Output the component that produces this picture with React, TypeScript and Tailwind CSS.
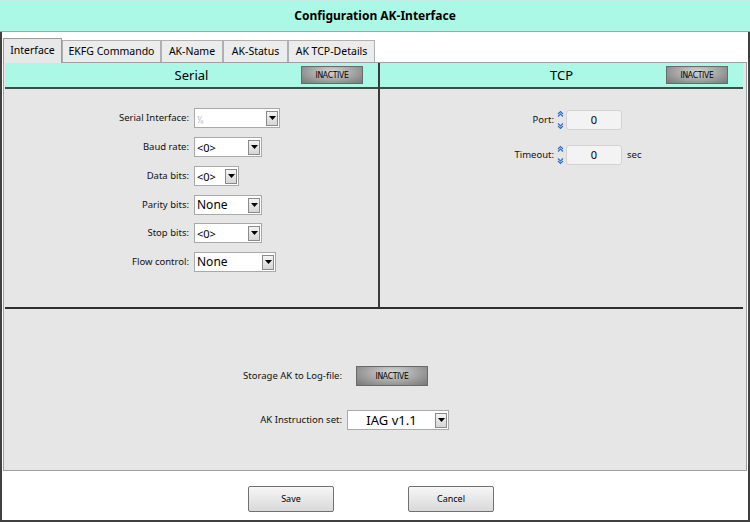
import React from "react";

const font = { fontFamily: '"Noto Sans", "Open Sans", Arial, sans-serif' };

function DropBtn() {
  return (
    <div className="w-[12px] h-[15px] my-auto mr-[1px] border border-[#8a8a8a] bg-gradient-to-b from-[#f4f4f4] to-[#d6d6d6] flex items-center justify-center">
      <svg width="7" height="4" viewBox="0 0 7 4"><path d="M0 0h7L3.5 4z" fill="#000" /></svg>
    </div>
  );
}

function Combo({ w, children, big }: { w: string; children?: React.ReactNode; big?: boolean }) {
  return (
    <div className={`${w} h-[20px] bg-white border border-[#a9a9a9] flex items-center`}>
      <div className={`flex-1 pl-[2px] ${big ? "text-[12px]" : "text-[11px]"} leading-none text-black`}>{children}</div>
      <DropBtn />
    </div>
  );
}

function Inactive({ w = "w-[62px]", h = "h-[18px]" }: { w?: string; h?: string }) {
  return (
    <div
      className={`${w} ${h} border border-[#6a6a6a] flex items-center justify-center text-[8.5px] tracking-[-0.3px] text-black bg-[radial-gradient(ellipse_at_50%_30%,#d6d6d6_0%,#ababab_45%,#787878_100%)]`}
      style={{ fontFamily: '"Liberation Sans Narrow", "DejaVu Sans Condensed", "Noto Sans", sans-serif' }}
    >
      INACTIVE
    </div>
  );
}

function Spin() {
  return (
    <svg width="7" height="20" viewBox="0 0 7 20" className="mr-[2px]">
      <path d="M1 4L3.5 1.5L6 4M1 6.5L3.5 4L6 6.5" stroke="#2f6fc8" strokeWidth="1.2" fill="none" />
      <path d="M1 13.5L3.5 16L6 13.5M1 16L3.5 18.5L6 16" stroke="#2f6fc8" strokeWidth="1.2" fill="none" />
    </svg>
  );
}

function NumBox() {
  return (
    <div className="w-[56px] h-[20px] rounded-[3px] border border-[#d2d2d2] bg-[#f3f3f3] flex items-center justify-center text-[11px] text-black">
      0
    </div>
  );
}

function Row({ label, children, mt }: { label: string; children: React.ReactNode; mt: string }) {
  return (
    <div className={`flex items-center ${mt}`}>
      <div className="w-[189px] text-right pr-[5px] text-[9.5px] text-[#111]">{label}</div>
      {children}
    </div>
  );
}

export default function App() {
  const tabs = ["EKFG Commando", "AK-Name", "AK-Status", "AK TCP-Details"];
  const tabW = ["w-[99px]", "w-[62px]", "w-[65px]", "w-[87px]"];
  return (
    <div className="w-[750px] h-[522px] bg-white flex flex-col" style={font}>
      <div className="h-[32px] shrink-0 bg-[#aaf8e5] border-t border-[#c8ece4] border-b border-b-[#8fb0a8] flex items-center justify-center">
        <span className="text-[12px] font-bold text-black">Configuration AK-Interface</span>
      </div>
      <div className="flex-1 border-l-2 border-r-2 border-b-2 border-[#404040] flex flex-col pl-[1px] pr-[1px]">
        {/* tabs */}
        <div className="flex items-end h-[30px] pt-[5px]">
          <div className="w-[59px] h-[25px] bg-[#e8e8e8] border border-[#9a9a9a] border-b-0 text-[10.5px] flex items-center justify-center text-black -mb-[1px] relative z-10">
            Interface
          </div>
          {tabs.map((t, i) => (
            <div
              key={t}
              className={`${tabW[i]} h-[22px] bg-[#ececec] border border-[#b0b0b0] border-b-0 text-[10.5px] flex items-center justify-center text-black`}
            >
              {t}
            </div>
          ))}
        </div>
        {/* panel */}
        <div className="h-[409px] bg-[#e6e6e6] border border-[#a0a0a0] flex flex-col">
          <div className="h-[244px] flex pl-[1px] pr-[3px]">
            {/* serial */}
            <div className="w-[373px] flex flex-col">
              <div className="h-[24px] bg-[#aaf8e5] flex items-center relative">
                <div className="flex-1 text-center text-[13px] text-black pt-[2px]">Serial</div>
                <div className="absolute left-[296px] top-[3px]"><Inactive /></div>
              </div>
              <div className="h-[2px] bg-[#34524b]" />
              <div className="flex flex-col pt-[19px]">
                <Row label="Serial Interface:" mt="mt-0">
                  <Combo w="w-[86px]">
                    <span className="text-[8px] text-[#9ab0d0] leading-none">⅟₀</span>
                  </Combo>
                </Row>
                <Row label="Baud rate:" mt="mt-[9px]">
                  <Combo w="w-[68px]">&lt;0&gt;</Combo>
                </Row>
                <Row label="Data bits:" mt="mt-[9px]">
                  <Combo w="w-[45px]">&lt;0&gt;</Combo>
                </Row>
                <Row label="Parity bits:" mt="mt-[9px]">
                  <Combo w="w-[68px]" big>None</Combo>
                </Row>
                <Row label="Stop bits:" mt="mt-[8px]">
                  <Combo w="w-[68px]">&lt;0&gt;</Combo>
                </Row>
                <Row label="Flow control:" mt="mt-[9px]">
                  <Combo w="w-[82px]" big>None</Combo>
                </Row>
              </div>
            </div>
            <div className="w-[2px] bg-[#3a3a3a]" />
            {/* tcp */}
            <div className="flex-1 flex flex-col">
              <div className="h-[24px] bg-[#aaf8e5] flex items-center relative">
                <div className="flex-1 text-center text-[13px] text-black pt-[2px]">TCP</div>
                <div className="absolute left-[286px] top-[3px]"><Inactive /></div>
              </div>
              <div className="h-[2px] bg-[#34524b]" />
              <div className="flex flex-col pt-[21px]">
                <div className="flex items-center">
                  <div className="w-[177px] text-right pr-[3px] text-[9.5px] text-[#111]">Port:</div>
                  <Spin />
                  <NumBox />
                </div>
                <div className="flex items-center mt-[15px]">
                  <div className="w-[177px] text-right pr-[3px] text-[9.5px] text-[#111]">Timeout:</div>
                  <Spin />
                  <NumBox />
                  <span className="ml-[5px] text-[9.5px] text-[#111]">sec</span>
                </div>
              </div>
            </div>
          </div>
          <div className="h-[2px] bg-[#2e2e2e] mx-[1px] mr-[3px]" />
          {/* bottom section */}
          <div className="flex-1 flex flex-col pt-[57px]">
            <div className="flex items-center">
              <div className="w-[338px] text-right text-[9.5px] text-[#111]">Storage AK to Log-file:</div>
              <div className="ml-[14px]"><Inactive w="w-[72px]" h="h-[20px]" /></div>
            </div>
            <div className="flex items-center mt-[24px]">
              <div className="w-[338px] text-right text-[9.5px] text-[#111]">AK Instruction set:</div>
              <div className="ml-[5px] w-[102px] h-[20px] bg-white border border-[#a9a9a9] flex items-center">
                <div className="flex-1 text-center text-[13px] leading-none text-black">
                  IAG v1.1
                </div>
                <DropBtn />
              </div>
            </div>
          </div>
        </div>
        {/* footer */}
        <div className="flex-1 flex items-start pt-[15px]">
          <div className="ml-[245px] w-[86px] h-[26px] rounded-[2px] border border-[#707070] bg-gradient-to-b from-[#f6f6f6] to-[#d9d9d9] flex items-center justify-center text-[9px] text-black">
            Save
          </div>
          <div className="ml-[74px] w-[86px] h-[26px] rounded-[2px] border border-[#707070] bg-gradient-to-b from-[#f6f6f6] to-[#d9d9d9] flex items-center justify-center text-[9px] text-black">
            Cancel
          </div>
        </div>
      </div>
    </div>
  );
}
